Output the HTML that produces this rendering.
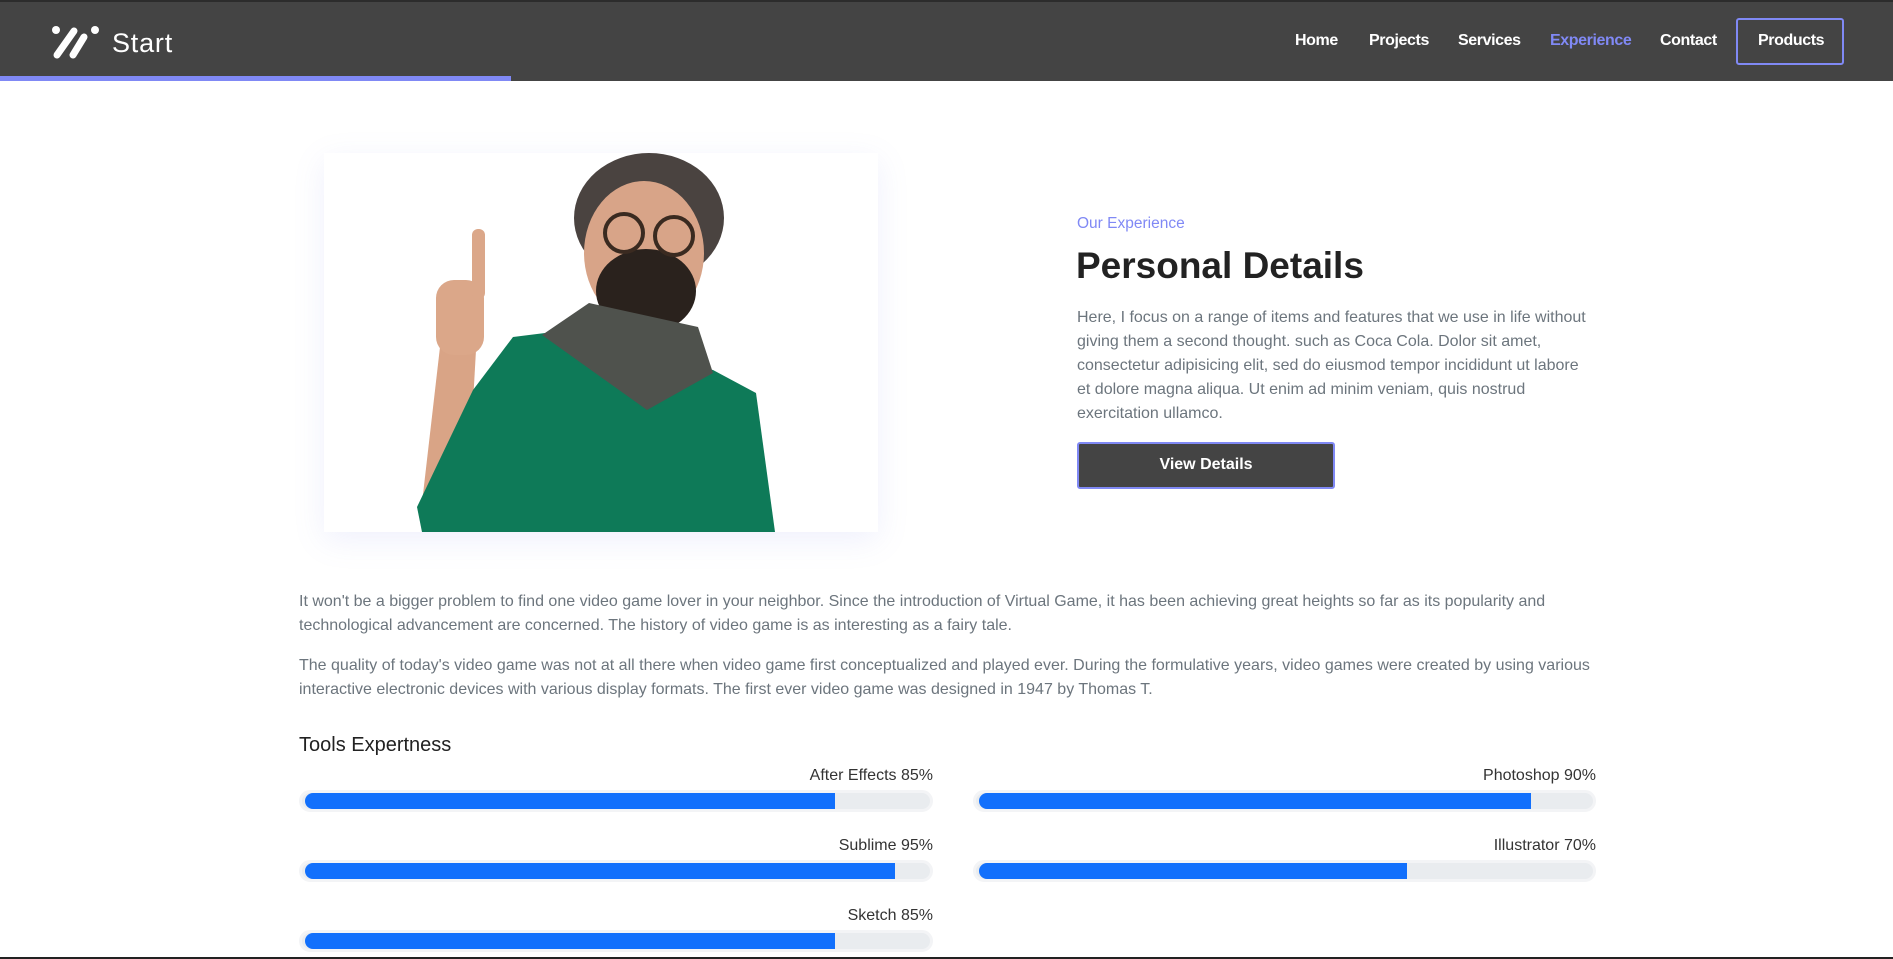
<!DOCTYPE html>
<html><head><meta charset="utf-8"><style>
*{margin:0;padding:0;box-sizing:border-box}
body{width:1893px;height:959px;overflow:hidden;background:#fff;font-family:"Liberation Sans",Arial,sans-serif;position:relative}
.hdr{position:absolute;left:0;top:0;width:1893px;height:81px;background:#444;border-top:2px solid #2c2c2c}
.bar{position:absolute;left:0;top:76px;width:511px;height:5px;background:#8089f5}
.logo{position:absolute;left:112px;top:28px;color:#fff;font-size:27px;letter-spacing:0.8px}
.nav a{position:absolute;top:32px;color:#fff;font-weight:bold;font-size:16px;text-decoration:none;letter-spacing:-0.4px}
.prod{position:absolute;left:1736px;top:18px;width:108px;height:47px;border:2.5px solid #8089f5;border-radius:3px}
.card{position:absolute;left:324px;top:153px;width:554px;height:379px;background:#fff;box-shadow:0 8px 30px rgba(120,130,230,0.12)}
.t{position:absolute;color:#6c757d;font-size:16px;line-height:24px}
.lbl{position:absolute;font-size:16px;color:#333;text-align:right}
.track{position:absolute;height:22px;border-radius:11px;background:#e9ecef;border:3px solid #f3f4f6}
.fill{position:absolute;left:3px;top:0;height:16px;border-radius:8px 0 0 8px;background:#1270fc}
</style></head><body>
<div class="hdr"></div>
<div class="bar"></div>
<svg style="position:absolute;left:50px;top:25px" width="52" height="36" viewBox="0 0 52 36">
<circle cx="6" cy="5" r="4" fill="#fff"/><circle cx="45" cy="5" r="4" fill="#fff"/>
<line x1="24" y1="6" x2="7" y2="30" stroke="#fff" stroke-width="7" stroke-linecap="round"/>
<line x1="34" y1="12" x2="23" y2="30" stroke="#fff" stroke-width="7" stroke-linecap="round"/>
</svg>
<div class="logo">Start</div>
<div class="nav">
<a style="left:1295px">Home</a><a style="left:1369px">Projects</a><a style="left:1458px">Services</a>
<a style="left:1550px;color:#8089f5">Experience</a><a style="left:1660px">Contact</a><a style="left:1758px">Products</a>
</div>
<div class="prod"></div>

<div class="card">
<svg width="554" height="379" viewBox="0 0 554 379">
<polygon points="98,350 116,194 152,197 149,250 110,379 98,379" fill="#d9a486"/>
<rect x="112" y="127" width="48" height="75" rx="18" fill="#dba789"/>
<rect x="148" y="76" width="13" height="70" rx="6" fill="#dba789"/>
<polygon points="93,354 149,237 189,184 221,180 389,217 432,240 451,379 98,379" fill="#0e7a58"/>
<ellipse cx="325" cy="65" rx="75" ry="65" fill="#4a4340"/>
<ellipse cx="320" cy="100" rx="60" ry="72" fill="#d8a488"/>
<ellipse cx="322" cy="138" rx="50" ry="42" fill="#2a221d"/>
<polygon points="218,182 265,150 374,174 389,220 323,257" fill="#4f524d"/>
<circle cx="300" cy="80" r="19" fill="none" stroke="#3a2a20" stroke-width="4"/>
<circle cx="350" cy="83" r="19" fill="none" stroke="#3a2a20" stroke-width="4"/>
</svg>
</div>

<div style="position:absolute;left:1077px;top:215px;color:#8089f5;font-size:15.5px">Our Experience</div>
<div style="position:absolute;left:1076px;top:245px;color:#222;font-size:37px;font-weight:bold">Personal Details</div>
<div class="t" style="left:1077px;top:306px;width:512px">Here, I focus on a range of items and features that we use in life without giving them a second thought. such as Coca Cola. Dolor sit amet, consectetur adipisicing elit, sed do eiusmod tempor incididunt ut labore et dolore magna aliqua. Ut enim ad minim veniam, quis nostrud exercitation ullamco.</div>
<div style="position:absolute;left:1077px;top:442px;width:258px;height:47px;background:#444;border:2.5px solid #8089f5;border-radius:3px;color:#fff;font-weight:bold;font-size:16px;text-align:center;line-height:42px">View Details</div>

<div class="t" style="left:299px;top:590px;width:1300px">It won't be a bigger problem to find one video game lover in your neighbor. Since the introduction of Virtual Game, it has been achieving great heights so far as its popularity and technological advancement are concerned. The history of video game is as interesting as a fairy tale.</div>
<div class="t" style="left:299px;top:654px;width:1300px">The quality of today's video game was not at all there when video game first conceptualized and played ever. During the formulative years, video games were created by using various interactive electronic devices with various display formats. The first ever video game was designed in 1947 by Thomas T.</div>
<div style="position:absolute;left:299px;top:734px;font-size:20px;color:#222">Tools Expertness</div>

<div class="lbl" style="left:299px;top:767px;width:634px">After Effects 85%</div>
<div class="track" style="left:299px;top:790px;width:634px"><div class="fill" style="width:530px"></div></div>
<div class="lbl" style="left:973px;top:767px;width:623px">Photoshop 90%</div>
<div class="track" style="left:973px;top:790px;width:623px"><div class="fill" style="width:552px"></div></div>
<div class="lbl" style="left:299px;top:837px;width:634px">Sublime 95%</div>
<div class="track" style="left:299px;top:860px;width:634px"><div class="fill" style="width:590px"></div></div>
<div class="lbl" style="left:973px;top:837px;width:623px">Illustrator 70%</div>
<div class="track" style="left:973px;top:860px;width:623px"><div class="fill" style="width:428px"></div></div>
<div class="lbl" style="left:299px;top:907px;width:634px">Sketch 85%</div>
<div class="track" style="left:299px;top:930px;width:634px"><div class="fill" style="width:530px"></div></div>
<div style="position:absolute;left:0;top:957px;width:1893px;height:2px;background:#222"></div>
</body></html>
